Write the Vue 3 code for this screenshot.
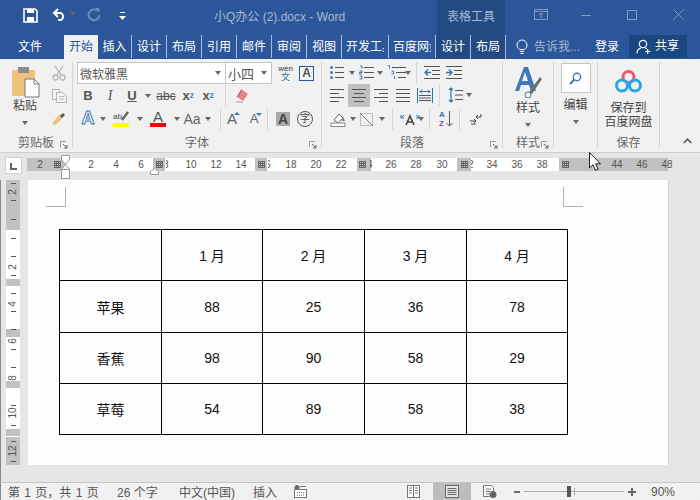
<script setup>
const tabs = [
  { t: "插入", w: 34 },
  { t: "设计", w: 35 },
  { t: "布局", w: 35 },
  { t: "引用", w: 35 },
  { t: "邮件", w: 35 },
  { t: "审阅", w: 35 },
  { t: "视图", w: 35 },
  { t: "开发工具", w: 47, clip: true },
  { t: "百度网盘", w: 47, clip: true },
  { t: "设计", w: 35, tool: true },
  { t: "布局", w: 35, tool: true },
];

// 水平标尺：灰/白分段
const hSegs = [
  { w: 39, grey: true },
  { w: 87 },
  { w: 12, grey: true },
  { w: 90 },
  { w: 12, grey: true },
  { w: 90 },
  { w: 14, grey: true },
  { w: 86 },
  { w: 14, grey: true },
  { w: 88 },
  { w: 109, grey: true },
];
const hNums = [
  [40, "2"], [91, "2"], [116, "4"], [141, "6"], [191, "10"], [216, "12"], [241, "14"],
  [291, "18"], [316, "20"], [341, "22"], [391, "26"], [416, "28"], [442, "30"],
  [492, "34"], [517, "36"], [542, "38"], [617, "44"], [642, "46"], [667, "48"],
];
// 被灰块遮住一半的数字
const hCuts = [[166, "8"], [268, "6"], [370, "4"], [471, "2"]];
const hGrids = [57, 159, 261, 362, 464, 565];

// 垂直标尺
const vSegs = [
  { h: 50, grey: true },
  { h: 49 },
  { h: 7, grey: true },
  { h: 43 },
  { h: 8, grey: true },
  { h: 44 },
  { h: 7, grey: true },
  { h: 41 },
  { h: 7, grey: true },
  { h: 1 },
  { h: 28, grey: true },
];
const vNums = [
  [192, "2"], [267, "2"], [304, "4"], [341, "6"], [378, "8"], [413, "10"], [451, "12"],
];
const vTicks = [183, 200, 219, 238, 256, 275, 293, 311, 329, 349, 367, 405, 425, 441, 461];

const rows = [
  ["", "1 月", "2 月", "3 月", "4 月"],
  ["苹果", "88", "25", "36", "78"],
  ["香蕉", "98", "90", "58", "29"],
  ["草莓", "54", "89", "58", "38"],
];
</script>

<template>
  <div class="app">
    <!-- 标题栏 -->
    <header class="titlebar">
      <div class="qat">
        <svg class="q-save" width="15" height="15" viewBox="0 0 15 15"><path d="M1 1h11l2 2v11H1z" fill="none" stroke="#fff" stroke-width="1.600"/><rect x="4" y="1" width="7" height="4" fill="#fff"/><rect x="4" y="9" width="7" height="5" fill="#fff"/></svg>
        <svg class="q-undo" width="15" height="13" viewBox="0 0 15 13"><path d="M2 5h7a4 4 0 0 1 0 7H6" fill="none" stroke="#fff" stroke-width="2"/><path d="M6 1 2 5l4 4" fill="none" stroke="#fff" stroke-width="2"/></svg>
        <i class="caret white q-c1"></i>
        <svg class="q-redo" width="14" height="14" viewBox="0 0 14 14"><path d="M11 3.200A5.400 5.400 0 1 0 12.400 7" fill="none" stroke="#6f8dbb" stroke-width="2"/><path d="M8 0h4.500v4.500z" fill="#6f8dbb"/></svg>
        <svg class="q-more" width="7" height="8" viewBox="0 0 7 8"><rect x="1" width="5" height="1" fill="#fff"/><path d="M0 4h7L3.500 8z" fill="#fff"/></svg>
      </div>
      <div class="doc-title">小Q办公 (2).docx - Word</div>
      <div class="tool-title">表格工具</div>
      <div class="winbtns">
        <svg width="14" height="11" viewBox="0 0 14 11"><rect x=".5" y=".5" width="13" height="10" fill="none" stroke="#7f9ac4"/><path d="M.5 2.500h13M7 9V4.500M5 6l2-2 2 2" fill="none" stroke="#7f9ac4"/></svg>
        <svg width="10" height="10" viewBox="0 0 10 10"><path d="M0 5.500h10" stroke="#7f9ac4"/></svg>
        <svg width="10" height="10" viewBox="0 0 10 10"><rect x=".5" y=".5" width="9" height="9" fill="none" stroke="#7f9ac4"/></svg>
        <svg width="11" height="11" viewBox="0 0 11 11"><path d="M.5.500l10 10M10.500.500l-10 10" stroke="#7f9ac4"/></svg>
      </div>
    </header>

    <!-- 选项卡 -->
    <nav class="tabbar">
      <div class="tab-file">文件</div>
      <div class="tab-active">开始</div>
      <div
        v-for="(tab, i) in tabs"
        :key="i"
        class="tab"
        :class="{ tool: tab.tool, clip: tab.clip }"
        :style="{ width: tab.w + 'px' }"
      >
        <span>{{ tab.t }}</span>
      </div>
      <div class="tell">
        <svg width="12" height="16" viewBox="0 0 12 16"><path d="M3.500 10.500C2 9 1 8 1 6a5 5 0 0 1 10 0c0 2-1 3-2.500 4.500z" fill="none" stroke="#fff"/><path d="M4 12.500h4M4.500 14.500h3" stroke="#fff"/></svg>
        <span>告诉我...</span>
      </div>
      <div class="login">登录</div>
      <div class="share">
        <svg width="15" height="15" viewBox="0 0 15 15"><circle cx="7" cy="5" r="3.700" fill="none" stroke="#fff" stroke-width="1.200"/><path d="M1 14.500c0-3 2-5 4-5.500M9 9c.8.200 1.300.500 1.800 1M9 12.500h5.500M11.700 10v5" fill="none" stroke="#fff" stroke-width="1.200"/></svg>
        <span>共享</span>
      </div>
    </nav>

    <!-- 功能区 -->
    <section class="ribbon">
      <div class="group g-clip">
        <div class="clip-body">
          <div class="paste">
            <svg width="30" height="32" viewBox="0 0 30 32">
              <rect x="1" y="4" width="23" height="26" rx="1" fill="#edc27c"/>
              <rect x="7" y="1" width="11" height="6" fill="#8c8c8c"/>
              <path d="M14 13h9l5 5v13H14z" fill="#fff" stroke="#777"/>
              <path d="M23 13v5h5" fill="none" stroke="#777"/>
            </svg>
            <span class="big-label">粘贴</span>
            <i class="caret"></i>
          </div>
          <div class="clip-tools">
            <svg width="14" height="16" viewBox="0 0 14 16"><path d="M3 1l6 9M11 1L5 10" stroke="#b5b5b5" stroke-width="1.300" fill="none"/><circle cx="3.500" cy="12.500" r="2.500" fill="none" stroke="#b5b5b5" stroke-width="1.300"/><circle cx="10.500" cy="12.500" r="2.500" fill="none" stroke="#b5b5b5" stroke-width="1.300"/></svg>
            <svg width="15" height="14" viewBox="0 0 15 14"><path d="M.5.500h7v3h-3v7h-4zM4.500 3.500h6l4 3.500v6.500h-10z" fill="#f3f3f3" stroke="#b5b5b5"/><path d="M7 7.500h5M7 10h5" stroke="#b5b5b5"/></svg>
            <svg width="16" height="15" viewBox="0 0 16 15"><path d="M9 3l3 3-3 4-5 4-3-1 2-3z" fill="#edc27c"/><path d="M9 5l3-3 2 2-3 3z" fill="#555"/></svg>
          </div>
        </div>
        <div class="group-label">剪贴板<svg class="launcher" width="8" height="8" viewBox="0 0 8 8"><path d="M.5 6V.500H6" fill="none" stroke="#999"/><path d="M3 3l4 4M4 7h3V4" fill="none" stroke="#666"/></svg></div>
      </div>

      <div class="group g-font">
        <div class="font-body">
          <div class="frow r1">
            <div class="combo c-font"><span>微软雅黑</span><i class="caret"></i></div>
            <div class="combo c-size"><span>小四</span><i class="caret"></i></div>
            <div class="wen"><span class="wen-a">wén</span><span class="wen-b">文</span></div>
            <div class="a-box">A</div>
          </div>
          <div class="frow r2">
            <b class="tb w22 glyph">B</b>
            <i class="tb w22 glyph it">I</i>
            <span class="tb w22 glyph under">U</span>
            <i class="caret w12c"></i>
            <span class="tb w24 glyph strike">abc</span>
            <span class="tb w20 glyph bx">x<sub>2</sub></span>
            <span class="tb w20 glyph bx">x<sup>2</sup></span>
            <span class="vsep s-a"></span>
            <svg class="m-er" width="15" height="15" viewBox="0 0 15 15"><path d="M6 1l7 5-5 7-6-4z" fill="#e8808f"/><path d="M2 9l4-6" stroke="#a05a64" fill="none"/><path d="M1 14h7" stroke="#999"/></svg>
          </div>
          <div class="frow r3">
            <span class="tb w22 a-fx">A</span>
            <i class="caret w8c"></i>
            <span class="tb w30 colorbtn">
              <svg width="16" height="11" viewBox="0 0 16 11"><path d="M9 9l6-8" stroke="#666" stroke-width="2.500"/><text x="0" y="8" font-size="8" fill="#444" font-family="Liberation Sans">ab</text></svg>
              <i class="bar yellow"></i>
            </span>
            <i class="caret w8c"></i>
            <span class="tb w30 colorbtn">
              <span class="a-col">A</span>
              <i class="bar red"></i>
            </span>
            <i class="caret w8c"></i>
            <span class="tb w24 aa">Aa</span>
            <i class="caret w8c"></i>
            <span class="vsep s-b"></span>
            <span class="tb w22 a-size up">A</span>
            <span class="tb w22 a-size down">A</span>
            <span class="vsep s-c"></span>
            <span class="a-shade">A</span>
            <span class="zi">字</span>
          </div>
        </div>
        <div class="group-label">字体<svg class="launcher" width="8" height="8" viewBox="0 0 8 8"><path d="M.5 6V.500H6" fill="none" stroke="#999"/><path d="M3 3l4 4M4 7h3V4" fill="none" stroke="#666"/></svg></div>
      </div>

      <div class="group g-para">
        <div class="para-body">
          <div class="prow">
            <svg class="pi" width="14" height="15" viewBox="0 0 14 15"><path d="M5 2.500h9M5 7.500h9M5 12.500h9" stroke="#555"/><circle cx="1.500" cy="2.500" r="1.500" fill="#3f78b5"/><circle cx="1.500" cy="7.500" r="1.500" fill="#3f78b5"/><circle cx="1.500" cy="12.500" r="1.500" fill="#3f78b5"/></svg>
            <i class="caret p-c1"></i>
            <svg class="p-num" width="15" height="15" viewBox="0 0 15 15"><path d="M5 2.500h10M5 7.500h10M5 12.500h10" stroke="#555"/><path d="M1 1h2v3M.500 6h2.500v1.500H.500V9H3M.500 11H3v3H.500" fill="none" stroke="#3f78b5"/></svg>
            <i class="caret p-c2"></i>
            <svg class="p-multi" width="19" height="15" viewBox="0 0 19 15"><path d="M5 2.500h14M9 7.500h10M11 12.500h8" stroke="#555"/><path d="M1 .500h1.500v3M4.500 6h2v3h-2M7.500 11v3" fill="none" stroke="#3f78b5"/></svg>
            <i class="caret p-c3"></i>
            <span class="vsep p-s1"></span>
            <svg class="p-in1" width="16" height="13" viewBox="0 0 16 13"><path d="M0 .500h16M8 4.500h8M8 8.500h8M0 12.500h16" stroke="#555"/><path d="M7 6.500H1M4 3.500l-3 3 3 3" fill="none" stroke="#2f6fb3" stroke-width="1.300"/></svg>
            <svg class="p-in2" width="16" height="13" viewBox="0 0 16 13"><path d="M0 .500h16M8 4.500h8M8 8.500h8M0 12.500h16" stroke="#555"/><path d="M0 6.500h6M3 3.500l3 3-3 3" fill="none" stroke="#2f6fb3" stroke-width="1.300"/></svg>
          </div>
          <div class="prow">
            <svg class="pi" width="14" height="13" viewBox="0 0 14 13"><path d="M0 .500h14M0 4.500h9M0 8.500h14M0 12.500h9" stroke="#555"/></svg>
            <span class="active-align"><svg width="14" height="13" viewBox="0 0 14 13"><path d="M0 .500h14M2 4.500h10M0 8.500h14M2 12.500h10" stroke="#555"/></svg></span>
            <svg class="p-right" width="14" height="13" viewBox="0 0 14 13"><path d="M0 .500h14M5 4.500h9M0 8.500h14M5 12.500h9" stroke="#555"/></svg>
            <svg class="p-just" width="14" height="13" viewBox="0 0 14 13"><path d="M0 .500h14M0 4.500h14M0 8.500h14M0 12.500h14" stroke="#555"/></svg>
            <svg class="p-dist" width="16" height="15" viewBox="0 0 16 15"><path d="M.500 0v15M15.500 0v15" stroke="#2f6fb3"/><path d="M3 3.500h10M5 1.500l-2 2 2 2M11 1.500l2 2-2 2" fill="none" stroke="#2f6fb3"/><path d="M2 7.500h12M2 10h12M2 12.500h12" stroke="#555"/></svg>
            <span class="vsep p-s2"></span>
            <svg class="p-line" width="15" height="16" viewBox="0 0 15 16"><path d="M7 3.500h8M7 8h8M7 12.500h8" stroke="#555"/><path d="M3 1v14M1 3l2-2 2 2M1 13l2 2 2-2" fill="none" stroke="#2f6fb3" stroke-width="1.200"/></svg>
            <i class="caret p-c4"></i>
          </div>
          <div class="prow">
            <svg class="pi" width="16" height="15" viewBox="0 0 16 15"><path d="M4 8l5-6 4 4-5 5z" fill="#fff" stroke="#666"/><path d="M13 5l2 4h-3z" fill="#3f78b5"/><rect x="1" y="11" width="14" height="3.500" fill="#fff" stroke="#888"/></svg>
            <i class="caret p-c5"></i>
            <svg class="p-bord" width="13" height="13" viewBox="0 0 13 13"><rect x=".5" y=".5" width="12" height="12" fill="none" stroke="#888" stroke-dasharray="1 1"/><path d="M0 0l13 13" stroke="#777"/></svg>
            <i class="caret p-c6"></i>
            <span class="vsep p-s3"></span>
            <svg class="p-xa" width="20" height="13" viewBox="0 0 20 13"><path d="M6 12l4-9 4 9M7.500 9h5" fill="none" stroke="#444" stroke-width="1.600"/><path d="M1 5l3-3M1 2v3h3M19 5l-3-3M19 2v3h-3" fill="none" stroke="#2f6fb3"/></svg>
            <i class="caret p-c7"></i>
            <span class="vsep p-s4"></span>
            <span class="sort"><span class="sort-az"><span class="a">A</span><span class="z">Z</span></span><svg width="7" height="16" viewBox="0 0 7 16"><path d="M3.500 0v15M.500 12l3 3 3-3" fill="none" stroke="#555"/></svg></span>
            <span class="vsep p-s5"></span>
            <svg class="p-mark" width="12" height="13" viewBox="0 0 12 13"><path d="M11 1v3H6M8 2L6 4l2 2" fill="none" stroke="#444"/><path d="M0 8h6M4 6l2 2-2 2M6 11H1" fill="none" stroke="#444"/></svg>
          </div>
        </div>
        <div class="group-label">段落<svg class="launcher" width="8" height="8" viewBox="0 0 8 8"><path d="M.5 6V.500H6" fill="none" stroke="#999"/><path d="M3 3l4 4M4 7h3V4" fill="none" stroke="#666"/></svg></div>
      </div>

      <div class="group g-style">
        <div class="big-btn">
          <svg width="28" height="32" viewBox="0 0 28 32"><path d="M1 25L10 1h4l8 24h-5l-2-6H7l-2 6zM8 15h6l-3-9z" fill="#3f78b5" fill-rule="evenodd"/><path d="M15 26l11-15 2 2-10 15z" fill="#6e6e6e"/><circle cx="14" cy="29" r="3" fill="none" stroke="#3f78b5"/></svg>
          <span class="big-label st">样式</span>
          <i class="caret"></i>
        </div>
        <div class="group-label">样式<svg class="launcher" width="8" height="8" viewBox="0 0 8 8"><path d="M.5 6V.500H6" fill="none" stroke="#999"/><path d="M3 3l4 4M4 7h3V4" fill="none" stroke="#666"/></svg></div>
      </div>

      <div class="group g-edit">
        <div class="big-btn">
          <span class="find-box"><svg width="13" height="13" viewBox="0 0 13 13"><circle cx="8" cy="5" r="3.700" fill="none" stroke="#3f78b5" stroke-width="1.400"/><path d="M5.200 7.800L1 12" stroke="#3f78b5" stroke-width="2"/></svg></span>
          <span class="big-label ed">编辑</span>
          <i class="caret"></i>
        </div>
        <div class="group-label">&nbsp;</div>
      </div>

      <div class="group g-save">
        <div class="big-btn">
          <svg class="cloud" width="27" height="23" viewBox="0 0 27 23"><circle cx="13.500" cy="7" r="5.500" fill="none" stroke="#f0556a" stroke-width="3"/><circle cx="7" cy="15.500" r="5.500" fill="none" stroke="#2aa7e8" stroke-width="3"/><circle cx="20" cy="15.500" r="5.500" fill="none" stroke="#2aa7e8" stroke-width="3"/></svg>
          <span class="big-label sv">保存到<br />百度网盘</span>
        </div>
        <div class="group-label">保存</div>
      </div>

      <div class="collapse">
        <svg width="9" height="6" viewBox="0 0 9 6"><path d="M.700 5l3.800-3.800L8.300 5" fill="none" stroke="#555" stroke-width="1.600"/></svg>
      </div>
    </section>

    <!-- 水平标尺 -->
    <div class="hruler-row">
      <div class="tabstop"><span class="tab-l"></span></div>
      <div class="hruler">
        <div
          v-for="(seg, i) in hSegs"
          :key="i"
          class="hseg"
          :class="{ grey: seg.grey }"
          :style="{ width: seg.w + 'px' }"
        ></div>
        <span
          v-for="n in hNums"
          :key="n[0]"
          class="hnum"
          :style="{ left: n[0] - 27 + 'px' }"
        >{{ n[1] }}</span>
        <span
          v-for="n in hCuts"
          :key="n[0]"
          class="hcut"
          :style="{ left: n[0] - 27 + 'px' }"
        >{{ n[1] }}</span>
        <span
          v-for="g in hGrids"
          :key="g"
          class="hgrid"
          :style="{ left: g - 27 + 'px' }"
        ></span>
        <svg class="indent-a" width="10" height="25" viewBox="0 0 10 25"><path d="M.5.500h8v4l-4 5-4-5zM4.500 9.500l4 5v9h-8v-9z" fill="#fff" stroke="#999"/><path d="M.5 14.500h8" stroke="#999"/></svg>
        <svg class="indent-b" width="10" height="7" viewBox="0 0 10 7"><path d="M.5 6.500v-3l4-3 4 3v3z" fill="#fff" stroke="#999"/></svg>
      </div>
    </div>

    <!-- 文档区 -->
    <main class="workspace">
      <aside class="vruler">
        <div
          v-for="(seg, i) in vSegs"
          :key="i"
          class="vseg"
          :class="{ grey: seg.grey }"
          :style="{ height: seg.h + 'px' }"
        ></div>
        <i
          v-for="t in vTicks"
          :key="t"
          class="vtick"
          :style="{ top: t - 180 + 'px' }"
        ></i>
        <span
          v-for="n in vNums"
          :key="n[0]"
          class="vnum"
          :style="{ top: n[0] - 187 + 'px' }"
        >{{ n[1] }}</span>
      </aside>
      <div class="page">
        <div class="corners"><i class="corner left"></i><i class="corner right"></i></div>
        <table class="sheet">
          <tbody>
            <tr v-for="(row, r) in rows" :key="r">
              <td v-for="(cell, c) in row" :key="c">{{ cell }}</td>
            </tr>
          </tbody>
        </table>
      </div>
    </main>

    <!-- 状态栏 -->
    <footer class="statusbar">
      <span class="s1">第 1 页，共 1 页</span>
      <span class="s2">26 个字</span>
      <span class="s3">中文(中国)</span>
      <span class="s4">插入</span>
      <svg class="s5" width="13" height="13" viewBox="0 0 13 13"><circle cx="3" cy="2.500" r="2.500" fill="#666"/><rect x=".5" y="4.500" width="12" height="8" fill="#fff" stroke="#777"/><path d="M3 7.500h7M3 10h7" stroke="#777" stroke-dasharray="1 1"/><path d="M6 1.500h6" stroke="#777"/></svg>
      <span class="status-right">
        <svg class="v-read" width="13" height="13" viewBox="0 0 13 13"><rect x=".5" y=".5" width="12" height="12" fill="#fff" stroke="#777"/><path d="M6.500 0v13M2 3h3M2 5.500h3M2 8h3M8 3h3M8 5.500h3M8 8h3" stroke="#777"/></svg>
        <span class="v-print"><svg width="14" height="13" viewBox="0 0 14 13"><rect x=".5" y=".5" width="13" height="12" fill="#e6e6e6" stroke="#666"/><path d="M2.500 3.500h9M2.500 5.500h9M2.500 7.500h9M2.500 9.500h9" stroke="#666"/></svg></span>
        <svg class="v-web" width="14" height="13" viewBox="0 0 14 13"><path d="M.5.500h8l2 2v5M.5.500v11h6" fill="#fff" stroke="#777"/><path d="M3 4h5M3 6.500h4M3 9h3" stroke="#777"/><circle cx="10" cy="9.500" r="3.500" fill="#666"/></svg>
        <span class="zoom-minus"></span>
        <span class="slider"><i class="mid"></i><i class="thumb"></i></span>
        <span class="zoom-plus"></span>
        <span class="pct">90%</span>
      </span>
    </footer>

    <!-- 鼠标指针 -->
    <svg class="cursor" width="12" height="20" viewBox="0 0 12 20"><path d="M.5.500v15.500l3.600-3.300 2.400 5.700 2.700-1.100-2.500-5.500h4.800z" fill="#fff" stroke="#1a2030"/></svg>
  </div>
</template>

<style scoped>
.app {
  position: relative;
  width: 700px;
  height: 500px;
  overflow: hidden;
  display: flex;
  flex-direction: column;
  font-family: "Liberation Sans", "Noto Sans CJK SC", sans-serif;
  font-size: 12px;
  color: #444;
  background: #e6e6e6;
}

/* 标题栏 */
.titlebar {
  height: 35px;
  flex: none;
  display: flex;
  align-items: stretch;
  background: #2b579a;
}
.qat {
  width: 214px;
  flex: none;
  display: flex;
  align-items: center;
  padding-bottom: 5px;
  box-sizing: border-box;
}
.q-save { margin-left: 23px; }
.q-undo { margin-left: 14px; margin-top: -2px; }
.q-c1 { margin-left: 3px; margin-top: -3px; border-top-color: #fff; }
.q-redo { margin-left: 11px; }
.q-more { margin-left: 18px; margin-top: 2px; }
.doc-title {
  width: 223px;
  flex: none;
  line-height: 35px;
  color: #a7b9d5;
}
.tool-title {
  width: 68px;
  flex: none;
  text-align: center;
  line-height: 35px;
  color: #a7b9d5;
  background: #234a82;
}
.winbtns {
  flex: 1;
  display: flex;
  align-items: center;
  padding: 0 0 6px 29px;
  gap: 36px;
}
.winbtns svg:nth-child(2) { margin-left: -3px; }

/* 选项卡 */
.tabbar {
  height: 24px;
  flex: none;
  display: flex;
  background: #2b579a;
  color: #fff;
  line-height: 25px;
}
.tab-file { width: 64px; flex: none; padding-left: 18px; box-sizing: border-box; }
.tab-active {
  width: 34px;
  flex: none;
  text-align: center;
  background: #f1f1f1;
  color: #2b579a;
}
.tab {
  flex: none;
  box-sizing: border-box;
  overflow: hidden;
  white-space: nowrap;
  text-align: center;
  height: 23px;
  border-right: 1px solid #a9bcd8;
}
.tab.tool { background: #234a82; height: 24px; }
.tab.clip span {
  display: block;
  width: 38px;
  margin-left: 4px;
  overflow: hidden;
  text-align: left;
}
.tell {
  width: 80px;
  flex: none;
  display: flex;
  align-items: center;
  padding-left: 10px;
  box-sizing: border-box;
  gap: 6px;
  color: #a7b9d5;
}
.login { width: 43px; flex: none; padding-left: 9px; box-sizing: border-box; }
.share {
  width: 58px;
  height: 23px;
  flex: none;
  display: flex;
  align-items: center;
  gap: 4px;
  padding-left: 7px;
  box-sizing: border-box;
  background: #194780;
}

/* 功能区 */
.ribbon {
  position: relative;
  height: 94px;
  flex: none;
  display: flex;
  box-sizing: border-box;
  padding: 3px 0 4px;
  background: repeating-conic-gradient(#f3f3f3 0 25%, #efefef 0 50%) 0 0 / 2px 2px;
  border-bottom: 1px solid #cfcfcf;
}
.group {
  position: relative;
  flex: none;
  box-sizing: border-box;
  display: flex;
  flex-direction: column;
  height: 86px;
  border-right: 1px solid #d6d6d6;
}
.g-clip { width: 73px; }
.g-font { width: 249px; }
.g-para { width: 181px; }
.g-style { width: 51px; }
.g-edit { width: 44px; }
.g-save { width: 62px; }
.group-label {
  position: relative;
  margin-top: auto;
  margin-bottom: -4px;
  height: 17px;
  line-height: 17px;
  text-align: center;
  color: #666;
}
.launcher { position: absolute; right: 4px; top: 6px; }
.big-label { line-height: 15px; color: #444; }
.caret {
  display: inline-block;
  width: 0;
  height: 0;
  border: 3.500px solid transparent;
  border-top: 4px solid #666;
  border-bottom: 0;
  flex: none;
}
.vsep {
  display: block;
  flex: none;
  width: 1px;
  background: #d6d6d6;
}

/* 剪贴板 */
.clip-body { display: flex; flex: 1; }
.paste {
  width: 50px;
  padding-top: 4px;
  display: flex;
  flex-direction: column;
  align-items: center;
}
.paste svg { margin-left: 2px; }
.paste .big-label { margin-top: 1px; color: #444; }
.paste .caret { margin-top: 7px; }
.clip-tools {
  display: flex;
  flex-direction: column;
  align-items: center;
  gap: 8px;
  padding-top: 3px;
  margin-left: 1px;
  width: 16px;
}

/* 字体 */
.font-body { flex: 1; padding-left: 4px; }
.frow { display: flex; align-items: center; }
.r1 { height: 22px; }
.r2 { height: 23px; }
.r3 { height: 23px; }
.combo {
  height: 22px;
  box-sizing: border-box;
  border: 1px solid #c6c6c6;
  background: #fff;
  display: flex;
  align-items: center;
  justify-content: space-between;
  padding: 0 4px 0 2px;
  color: #555;
}
.c-font { width: 149px; font-size: 12px; }
.c-size { width: 47px; margin-left: -1px; font-size: 13px; }
.wen {
  width: 17px;
  margin-left: 5px;
  display: flex;
  flex-direction: column;
  align-items: center;
  line-height: 8px;
}
.wen-a { font-size: 8px; color: #333; }
.wen-b { font-size: 9px; color: #2f6fb3; }
.a-box {
  width: 15px;
  height: 15px;
  margin-left: 5px;
  box-sizing: border-box;
  border: 1px solid #2b579a;
  text-align: center;
  line-height: 13px;
  font-weight: 700;
  color: #555;
}
.tb { display: flex; align-items: center; justify-content: center; flex: none; font-style: normal; }
.w20 { width: 20px; }
.w22 { width: 22px; }
.w24 { width: 24px; }
.w30 { width: 30px; }
.w12c { margin: 0 3px 0 2px; }
.w8c { margin: 0 0 0 1px; }
.glyph { font-size: 13px; color: #555; font-weight: 700; }
.it { font-family: "Liberation Serif", serif; font-style: italic; font-size: 14px; font-weight: 400; }
.under { text-decoration: underline; }
.strike { text-decoration: line-through; font-weight: 400; font-size: 12px; }
.bx { font-size: 13px; }
.bx sub, .bx sup { font-size: 7px; color: #2f6fb3; }
.s-a { height: 22px; margin-left: 7px; }
.m-er { margin-left: 9px; }
.a-fx {
  font-size: 18px;
  font-weight: 700;
  color: #fff;
  -webkit-text-stroke: 1px #3f78b5;
}
.colorbtn { flex-direction: column; gap: 1px; }
.a-col { font-size: 15px; line-height: 11px; color: #555; }
.bar { width: 16px; height: 4px; display: block; }
.yellow { background: #ffff00; }
.red { background: #ff0000; }
.aa { font-size: 14px; color: #666; }
.s-b { height: 22px; margin-left: 9px; }
.a-size { position: relative; font-size: 15px; color: #666; margin-left: 0; }
.a-size.up::after, .a-size.down::after {
  content: "";
  position: absolute;
  right: 3px;
  top: 2px;
  border: 3px solid transparent;
  border-top: 0;
  border-bottom: 3px solid #3f78b5;
}
.a-size.down { font-size: 13px; }
.a-size.down::after { border-bottom: 0; border-top: 3px solid #3f78b5; }
.s-c { height: 22px; margin-left: 2px; }
.a-shade {
  width: 14px;
  height: 14px;
  margin-left: 8px;
  background: #a9a9a9;
  text-align: center;
  line-height: 14px;
  font-size: 14px;
  font-weight: 700;
  color: #444;
}
.zi {
  width: 14px;
  height: 14px;
  margin-left: 7px;
  border: 1px solid #555;
  border-radius: 50%;
  text-align: center;
  line-height: 13px;
  font-size: 10px;
}

/* 段落 */
.para-body { flex: 1; padding-left: 8px; }
.prow { display: flex; align-items: center; height: 24px; }
.prow:first-child { height: 21px; }
.p-c1 { margin-left: 5px; }
.p-num { margin-left: 4px; }
.p-c2 { margin-left: 3px; }
.p-multi { margin-left: 4px; }
.p-c3 { margin-left: -1px; }
.p-s1 { height: 21px; margin-left: 5px; }
.p-in1 { margin-left: 7px; }
.p-in2 { margin-left: 6px; }
.active-align {
  width: 22px;
  height: 23px;
  margin-left: 4px;
  display: flex;
  align-items: center;
  justify-content: center;
  background: #c0c0c0;
}
.p-right { margin-left: 4px; }
.p-just { margin-left: 8px; }
.p-dist { margin-left: 7px; }
.p-s2 { height: 21px; margin-left: 6px; }
.p-line { margin-left: 8px; }
.p-c4 { margin-left: 3px; }
.p-c5 { margin-left: 4px; }
.p-bord { margin-left: 4px; }
.p-c6 { margin-left: 6px; }
.p-s3 { height: 21px; margin-left: 7px; }
.p-xa { margin-left: 7px; }
.p-c7 { margin-left: -2px; }
.p-s4 { height: 21px; margin-left: 5px; }
.sort { display: flex; margin-left: 9px; align-items: center; gap: 1px; }
.sort-az { display: flex; flex-direction: column; gap: 1px; font-size: 8px; line-height: 8px; font-weight: 700; }
.sort .a { color: #2f6fb3; }
.sort .z { color: #8a4fb0; }
.p-s5 { height: 21px; margin-left: 6px; }
.p-mark { margin-left: 10px; }

/* 大按钮 */
.big-btn {
  flex: 1;
  display: flex;
  flex-direction: column;
  align-items: center;
}
.g-style .big-btn svg { margin-top: 4px; }
.st { margin-top: 3px; }
.g-style .caret, .g-edit .caret { margin-top: 7px; }
.find-box {
  width: 30px;
  height: 30px;
  box-sizing: border-box;
  margin-top: 1px;
  border: 1px solid #c6c6c6;
  background: #fff;
  display: flex;
  align-items: center;
  justify-content: center;
}
.ed { margin-top: 5px; }
.cloud { margin-top: 8px; }
.sv { margin-top: 8px; text-align: center; line-height: 14px; }
.collapse { position: absolute; right: 8px; bottom: 5px; }

/* 水平标尺 */
.hruler-row {
  height: 27px;
  flex: none;
  display: flex;
  box-sizing: border-box;
  padding-top: 5px;
  background: repeating-conic-gradient(#e8e8e8 0 25%, #e4e4e4 0 50%) 0 0 / 2px 2px;
}
.tabstop {
  width: 17px;
  height: 17px;
  margin: -1px 0 0 5px;
  flex: none;
  box-sizing: border-box;
  background: #fff;
  border: 1px solid #d2d2d2;
  display: flex;
  align-items: center;
  justify-content: center;
}
.tab-l {
  width: 5px;
  height: 5px;
  margin-top: 2px;
  border-left: 2px solid #666;
  border-bottom: 2px solid #666;
}
.hruler {
  position: relative;
  margin-left: 5px;
  display: flex;
  height: 13px;
}
.hseg { height: 13px; flex: none; background: #fff; }
.hseg.grey { background: #c1c1c1; }
.hnum {
  position: absolute;
  top: 0;
  width: 20px;
  margin-left: -10px;
  text-align: center;
  font-size: 10px;
  line-height: 13px;
  color: #555;
}
.hcut {
  position: absolute;
  top: 0;
  width: 3px;
  overflow: hidden;
  text-indent: -3px;
  font-size: 10px;
  line-height: 13px;
  color: #555;
}
.hgrid {
  position: absolute;
  top: 3px;
  width: 7px;
  height: 7px;
  margin-left: -3px;
  background:
    repeating-linear-gradient(90deg, #666 0 1px, transparent 1px 2px),
    repeating-linear-gradient(0deg, #666 0 1px, #c1c1c1 1px 2px);
}
.indent-a { position: absolute; left: 34px; top: -3px; }
.indent-b { position: absolute; left: 123px; top: 10px; }

/* 文档区 */
.workspace {
  flex: 1;
  min-height: 0;
  display: flex;
  border-left: 1px solid #8a8a8a;
  background: repeating-conic-gradient(#e8e8e8 0 25%, #e4e4e4 0 50%) 0 0 / 2px 2px;
}
.vruler {
  position: relative;
  width: 14px;
  margin-left: 5px;
  flex: none;
  height: 285px;
}
.vseg { width: 14px; background: #fff; }
.vseg.grey { background: #c1c1c1; }
.vtick {
  position: absolute;
  left: 5px;
  width: 5px;
  height: 1px;
  background: #555;
}
.vnum {
  position: absolute;
  left: 0;
  width: 14px;
  text-align: center;
  font-size: 10px;
  line-height: 14px;
  transform: rotate(-90deg);
  color: #555;
}
.page {
  width: 641px;
  height: 285px;
  margin-left: 8px;
  flex: none;
  box-sizing: border-box;
  padding: 7px 0 0 18px;
  background: #fdfdfd;
  border-right: 1px solid #d0d0d0;
}
.corners {
  width: 537px;
  height: 20px;
  display: flex;
  justify-content: space-between;
}
.corner { display: block; width: 20px; height: 20px; box-sizing: border-box; border-bottom: 1px solid #b0b0b0; }
.corner.left { border-right: 1px solid #b0b0b0; }
.corner.right { border-left: 1px solid #b0b0b0; }
.sheet {
  margin: 22px 0 0 13px;
  width: 509px;
  border-collapse: collapse;
  table-layout: fixed;
  font-size: 14px;
  color: #111;
}
.sheet tr { height: 51px; }
.sheet tr:nth-child(2) { height: 52px; }
.sheet td {
  box-sizing: border-box;
  padding: 0;
  border: 1px solid #000;
  text-align: center;
  vertical-align: middle;
}
.sheet td:nth-child(1), .sheet td:nth-child(3), .sheet td:nth-child(4) { width: 102px; }
.sheet td:nth-child(2), .sheet td:nth-child(5) { width: 101px; }

/* 状态栏 */
.statusbar {
  height: 18px;
  flex: none;
  box-sizing: border-box;
  display: flex;
  align-items: center;
  background: repeating-conic-gradient(#f3f3f3 0 25%, #efefef 0 50%) 0 0 / 2px 2px;
  border-top: 1px solid #c6c6c6;
  border-left: 1px solid #8a8a8a;
  color: #555;
}
.s1 { margin-left: 7px; width: 109px; flex: none; word-spacing: 1px; }
.s2 { width: 62px; flex: none; }
.s3 { width: 74px; flex: none; }
.s4 { width: 41px; flex: none; }
.status-right { margin-left: 100px; display: flex; align-items: center; height: 100%; }
.v-print {
  width: 38px;
  height: 100%;
  margin-left: 13px;
  display: flex;
  align-items: center;
  justify-content: center;
  background: #bdbdbd;
}
.v-web { margin-left: 12px; }
.zoom-minus { width: 6px; height: 2px; margin-left: 17px; background: #666; }
.slider {
  position: relative;
  width: 100px;
  height: 1px;
  margin-left: 4px;
  background: #aaa;
}
.slider .mid { position: absolute; left: 50px; top: -3px; width: 1px; height: 7px; background: #aaa; }
.slider .thumb { position: absolute; left: 43px; top: -5px; width: 4px; height: 11px; background: #555; }
.zoom-plus {
  position: relative;
  width: 8px;
  height: 2px;
  margin-left: 4px;
  background: #666;
}
.zoom-plus::after {
  content: "";
  position: absolute;
  left: 3px;
  top: -3px;
  width: 2px;
  height: 8px;
  background: #666;
}
.pct { margin-left: 15px; font-size: 12px; }
.cursor { position: absolute; left: 589px; top: 152px; }
</style>

<style>
html, body { margin: 0; padding: 0; }
</style>
